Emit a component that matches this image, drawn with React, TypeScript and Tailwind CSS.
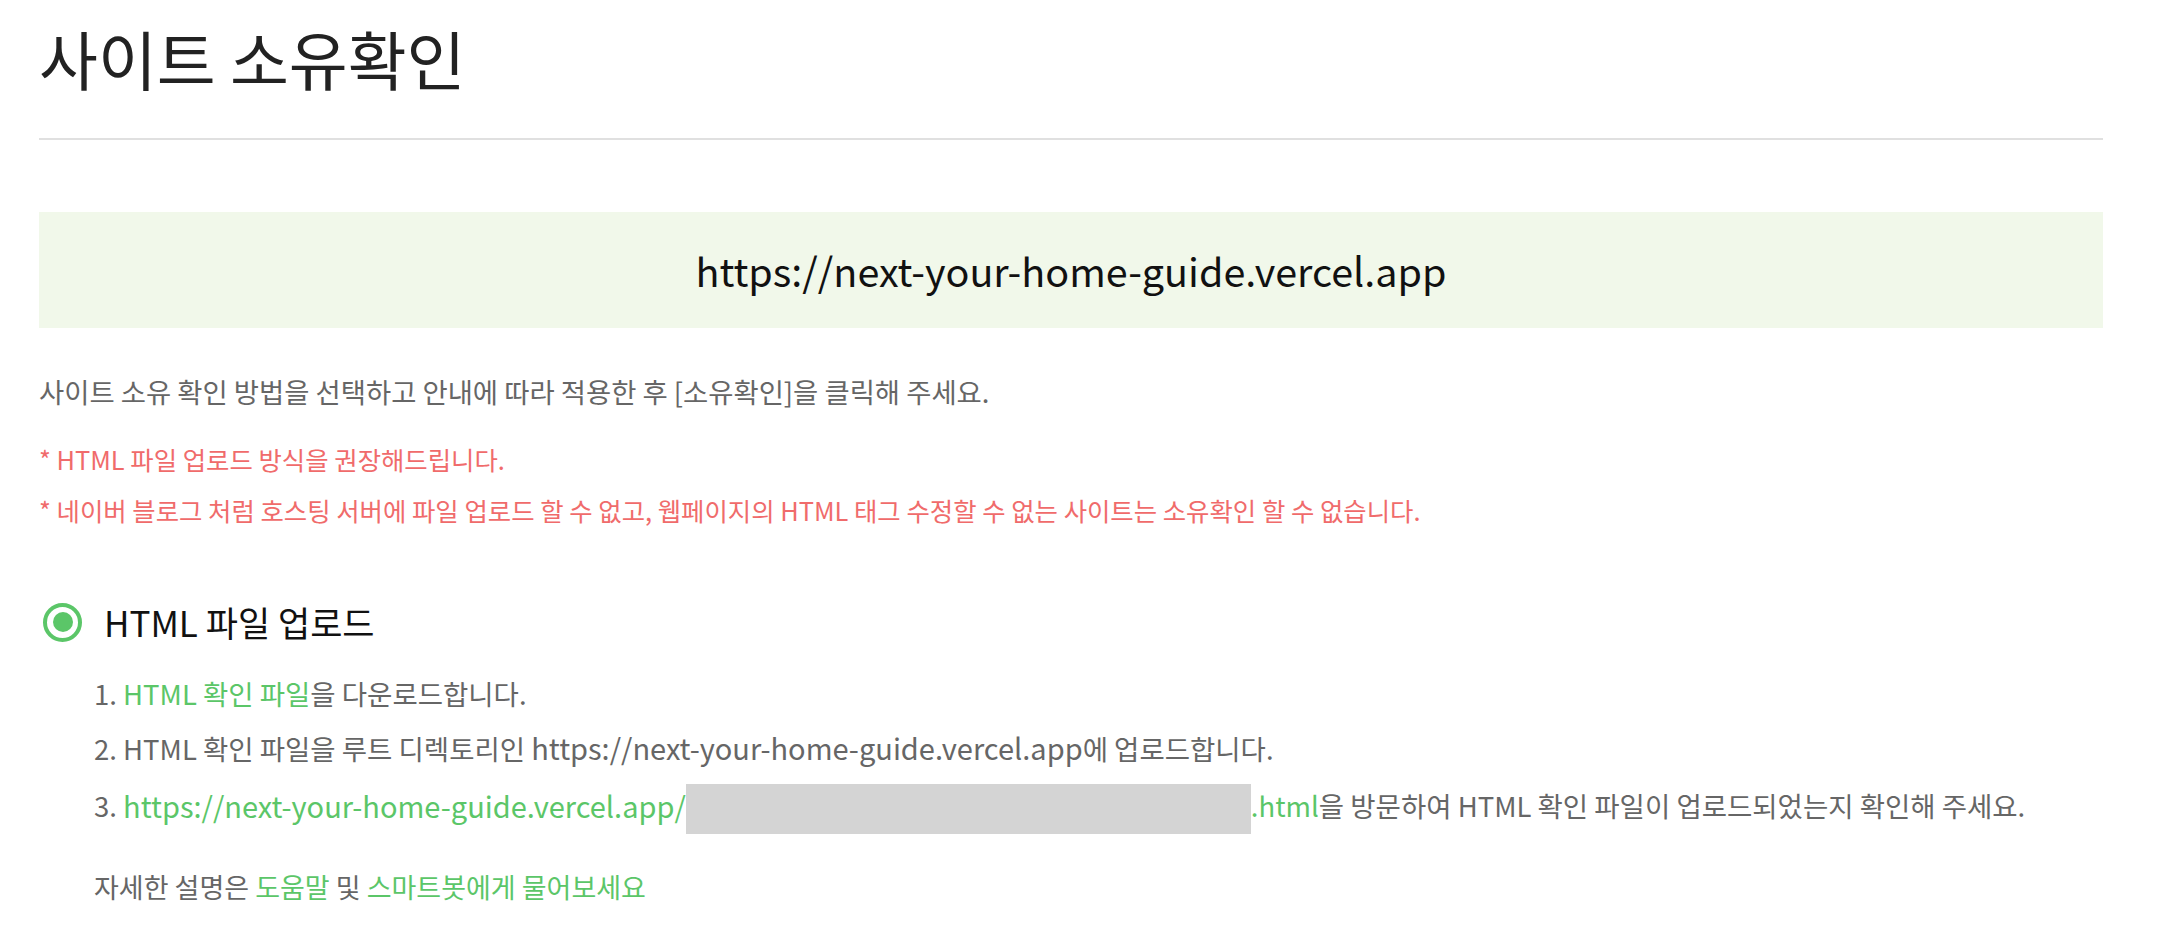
import React from 'react';

const font = { fontFamily: '"Noto Sans CJK KR", "Noto Sans", sans-serif' };

const SITE = 'https://next-your-home-guide.vercel.app';

const steps = [
  {
    id: 1,
    content: (
      <>
        <span className="text-[#5bc668]">HTML 확인 파일</span>을 다운로드합니다.
      </>
    ),
  },
  {
    id: 2,
    content: (
      <>
        HTML 확인 파일을 루트 디렉토리인 <span className="text-[29px]">{SITE}</span>에 업로드합니다.
      </>
    ),
  },
];

export default function App() {
  return (
    <div className="min-h-[950px] w-full bg-white" style={font}>
      <div className="ml-[39px] mr-[63px] pt-[22px]">
        <h1 className="text-[64px] leading-[70px] font-normal text-[#222]">사이트 소유확인</h1>
        <div className="mt-[46px] h-[2px] bg-[#e0e0e0]" />

        <div className="mt-[72px] flex h-[116px] items-center justify-center bg-[#f1f8ea]">
          <span className="text-[39.5px] text-[#111]">{SITE}</span>
        </div>

        <p className="mt-[45px] text-[27.4px] leading-[36px] text-[#666]">
          사이트 소유 확인 방법을 선택하고 안내에 따라 적용한 후 [소유확인]을 클릭해 주세요.
        </p>
        <p className="mt-[32px] text-[25.4px] leading-[36px] text-[#f06b6b]">* HTML 파일 업로드 방식을 권장해드립니다.</p>
        <p className="mt-[15px] text-[25.4px] leading-[36px] text-[#f06b6b]">
          * 네이버 블로그 처럼 호스팅 서버에 파일 업로드 할 수 없고, 웹페이지의 HTML 태그 수정할 수 없는 사이트는 소유확인 할 수 없습니다.
        </p>

        <div className="mt-[74px] flex h-[40px] items-center">
          <span className="ml-[4px] flex h-[39px] w-[39px] items-center justify-center rounded-full border-[4px] border-[#5bc668]">
            <span className="h-[20px] w-[20px] rounded-full bg-[#5bc668]" />
          </span>
          <span className="ml-[22px] text-[35px] text-[#111]">HTML 파일 업로드</span>
        </div>

        <div className="ml-[55px]">
          <ol className="mt-[33px] flex flex-col gap-[18px] text-[27.5px] leading-[36px] text-[#666]">
            {steps.map(step => (
              <li key={step.id} className="flex items-center">
                <span>{step.id}.&nbsp;</span>
                <span>{step.content}</span>
              </li>
            ))}
            <li className="-mt-[4px] flex h-[50px] items-center">
              <span>3.&nbsp;</span>
              <span className="text-[29px] text-[#5bc668]">{SITE}/</span>
              {/* masked file name */}
              <span className="mt-[8px] h-[50px] w-[565px] shrink-0 bg-[#d4d4d4]" />
              <span className="text-[#5bc668]">.html</span>
              <span>을 방문하여 HTML 확인 파일이 업로드되었는지 확인해 주세요.</span>
            </li>
          </ol>

          <p className="mt-[39px] text-[27px] leading-[36px] text-[#666]">
            자세한 설명은 <span className="text-[#5bc668]">도움말</span> 및{' '}
            <span className="text-[#5bc668]">스마트봇에게 물어보세요</span>
          </p>
        </div>
      </div>
    </div>
  );
}
